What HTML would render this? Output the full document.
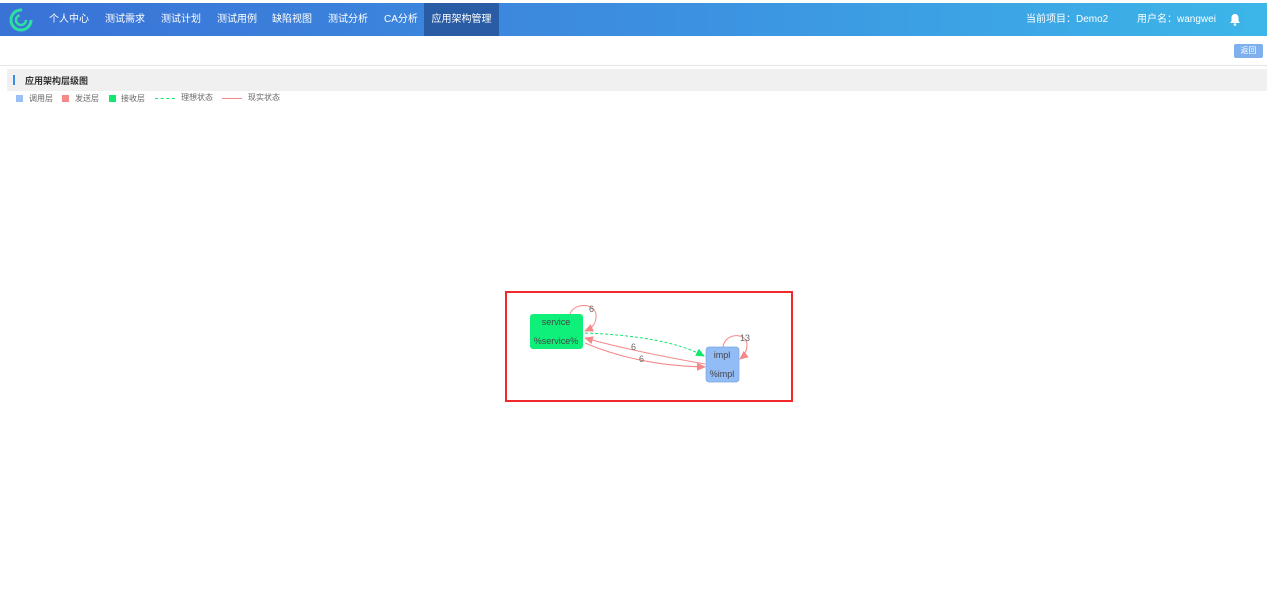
<!DOCTYPE html><html><head><meta charset="utf-8"><style>
body{margin:0;width:1267px;height:605px;background:#fff;font-family:"Liberation Sans","Noto Sans CJK SC",sans-serif;position:relative;overflow:hidden}
.hd{position:absolute;left:0;top:3px;width:1267px;height:33px;background:linear-gradient(90deg,#3a72d6,#3c8ee0 50%,#3cb6e8);color:#fff;font-size:10px}
.hd span{position:absolute;top:0;line-height:33px}
.act{background:#2a5ca6;height:33px;width:75px;text-align:center}
.t{position:absolute}
</style></head><body>
<div class="hd">
<svg style="position:absolute;left:9px;top:5px" width="24" height="24" viewBox="0 0 24 24"><circle cx="12" cy="12" r="10" fill="none" stroke="#2ee0a0" stroke-width="3" stroke-dasharray="48 15"/><circle cx="12" cy="12" r="5" fill="none" stroke="#2ee0a0" stroke-width="2.5" stroke-dasharray="22 10"/></svg>
<span style="left:49px">个人中心</span><span style="left:105px">测试需求</span><span style="left:161px">测试计划</span><span style="left:217px">测试用例</span><span style="left:272px">缺陷视图</span><span style="left:328px">测试分析</span><span style="left:384px">CA分析</span><span class="act" style="left:424px">应用架构管理</span>
<span style="left:1026px">当前项目：Demo2</span><span style="left:1137px">用户名：wangwei</span>
<svg style="position:absolute;left:1229px;top:10px" width="12" height="13" viewBox="0 0 12 13"><path d="M6 1C3.5 1 2.5 3 2.5 5v3L1 10h10L9.5 8V5C9.5 3 8.5 1 6 1z" fill="#fff"/><circle cx="6" cy="11.5" r="1.3" fill="#fff"/></svg>
</div>
<div class="t" style="left:1234px;top:44px;width:29px;height:14px;background:#7eb0ee;border-radius:2px;color:#fff;font-size:8px;text-align:center;line-height:14px">返回</div>
<div class="t" style="left:0;top:65px;width:1267px;height:1px;background:#e6e6e6"></div>
<div class="t" style="left:7px;top:69px;width:1260px;height:22px;background:#f0f0f0"></div>
<div class="t" style="left:13px;top:75px;width:2px;height:10px;background:#3a8ee6"></div>
<div class="t" style="left:25px;top:74px;font-size:9px;font-weight:bold;color:#333">应用架构层级图</div>
<div class="t" style="left:16px;top:95px;width:7px;height:7px;background:#9ac0f5"></div><div class="t" style="left:29px;top:93px;font-size:8px;color:#666">调用层</div>
<div class="t" style="left:62px;top:95px;width:7px;height:7px;background:#f58888"></div><div class="t" style="left:75px;top:93px;font-size:8px;color:#666">发送层</div>
<div class="t" style="left:109px;top:95px;width:7px;height:7px;background:#10e870"></div><div class="t" style="left:121px;top:93px;font-size:8px;color:#666">接收层</div>
<div class="t" style="left:155px;top:98px;width:20px;border-top:1px dashed #10e870"></div><div class="t" style="left:181px;top:92px;font-size:8px;color:#666">理想状态</div>
<div class="t" style="left:222px;top:98px;width:20px;border-top:1px solid #f58888"></div><div class="t" style="left:248px;top:92px;font-size:8px;color:#666">现实状态</div>
<div class="t" style="left:505px;top:291px;width:284px;height:107px;border:2px solid #f02a2a"></div>
<svg class="t" style="left:0;top:0" width="1267" height="605">
<defs><marker id="r" markerWidth="9" markerHeight="8" refX="8" refY="4" orient="auto" markerUnits="userSpaceOnUse"><path d="M0 0L9 4L0 8z" fill="#f58888"/></marker><marker id="g" markerWidth="9" markerHeight="8" refX="8" refY="4" orient="auto" markerUnits="userSpaceOnUse"><path d="M0 0L9 4L0 8z" fill="#10e870"/></marker></defs>
<rect x="530" y="314" width="53" height="35" rx="3" fill="#0ff07a"/>
<rect x="706" y="347" width="33" height="35" rx="3" fill="#92bcf5" stroke="#7aa8e8" stroke-width="0.7"/>
<path d="M570 314C574 302 598 302 596 318C595 325 592 328 585 331" fill="none" stroke="#f58888" marker-end="url(#r)"/>
<path d="M723 347C725 332 748 332 747 346C746 352 745 355 740 359" fill="none" stroke="#f58888" marker-end="url(#r)"/>
<path d="M585 333C640 335 680 343 704 356" fill="none" stroke="#10e870" stroke-dasharray="3 2" marker-end="url(#g)"/>
<path d="M705 364C660 356 620 348 585 338" fill="none" stroke="#f58888" marker-end="url(#r)"/>
<path d="M585 343C620 358 660 366 705 367" fill="none" stroke="#f58888" marker-end="url(#r)"/>
<g font-size="9" fill="#666" font-family="Liberation Sans,sans-serif"><text x="589" y="312">6</text><text x="740" y="341">13</text><text x="631" y="350">6</text><text x="639" y="362">6</text></g>
<g font-size="9" fill="#444" font-family="Liberation Sans,sans-serif" text-anchor="middle"><text x="556" y="325">service</text><text x="556" y="344">%service%</text><text x="722" y="358">impl</text><text x="722" y="377">%impl</text></g>
</svg>
</body></html>
